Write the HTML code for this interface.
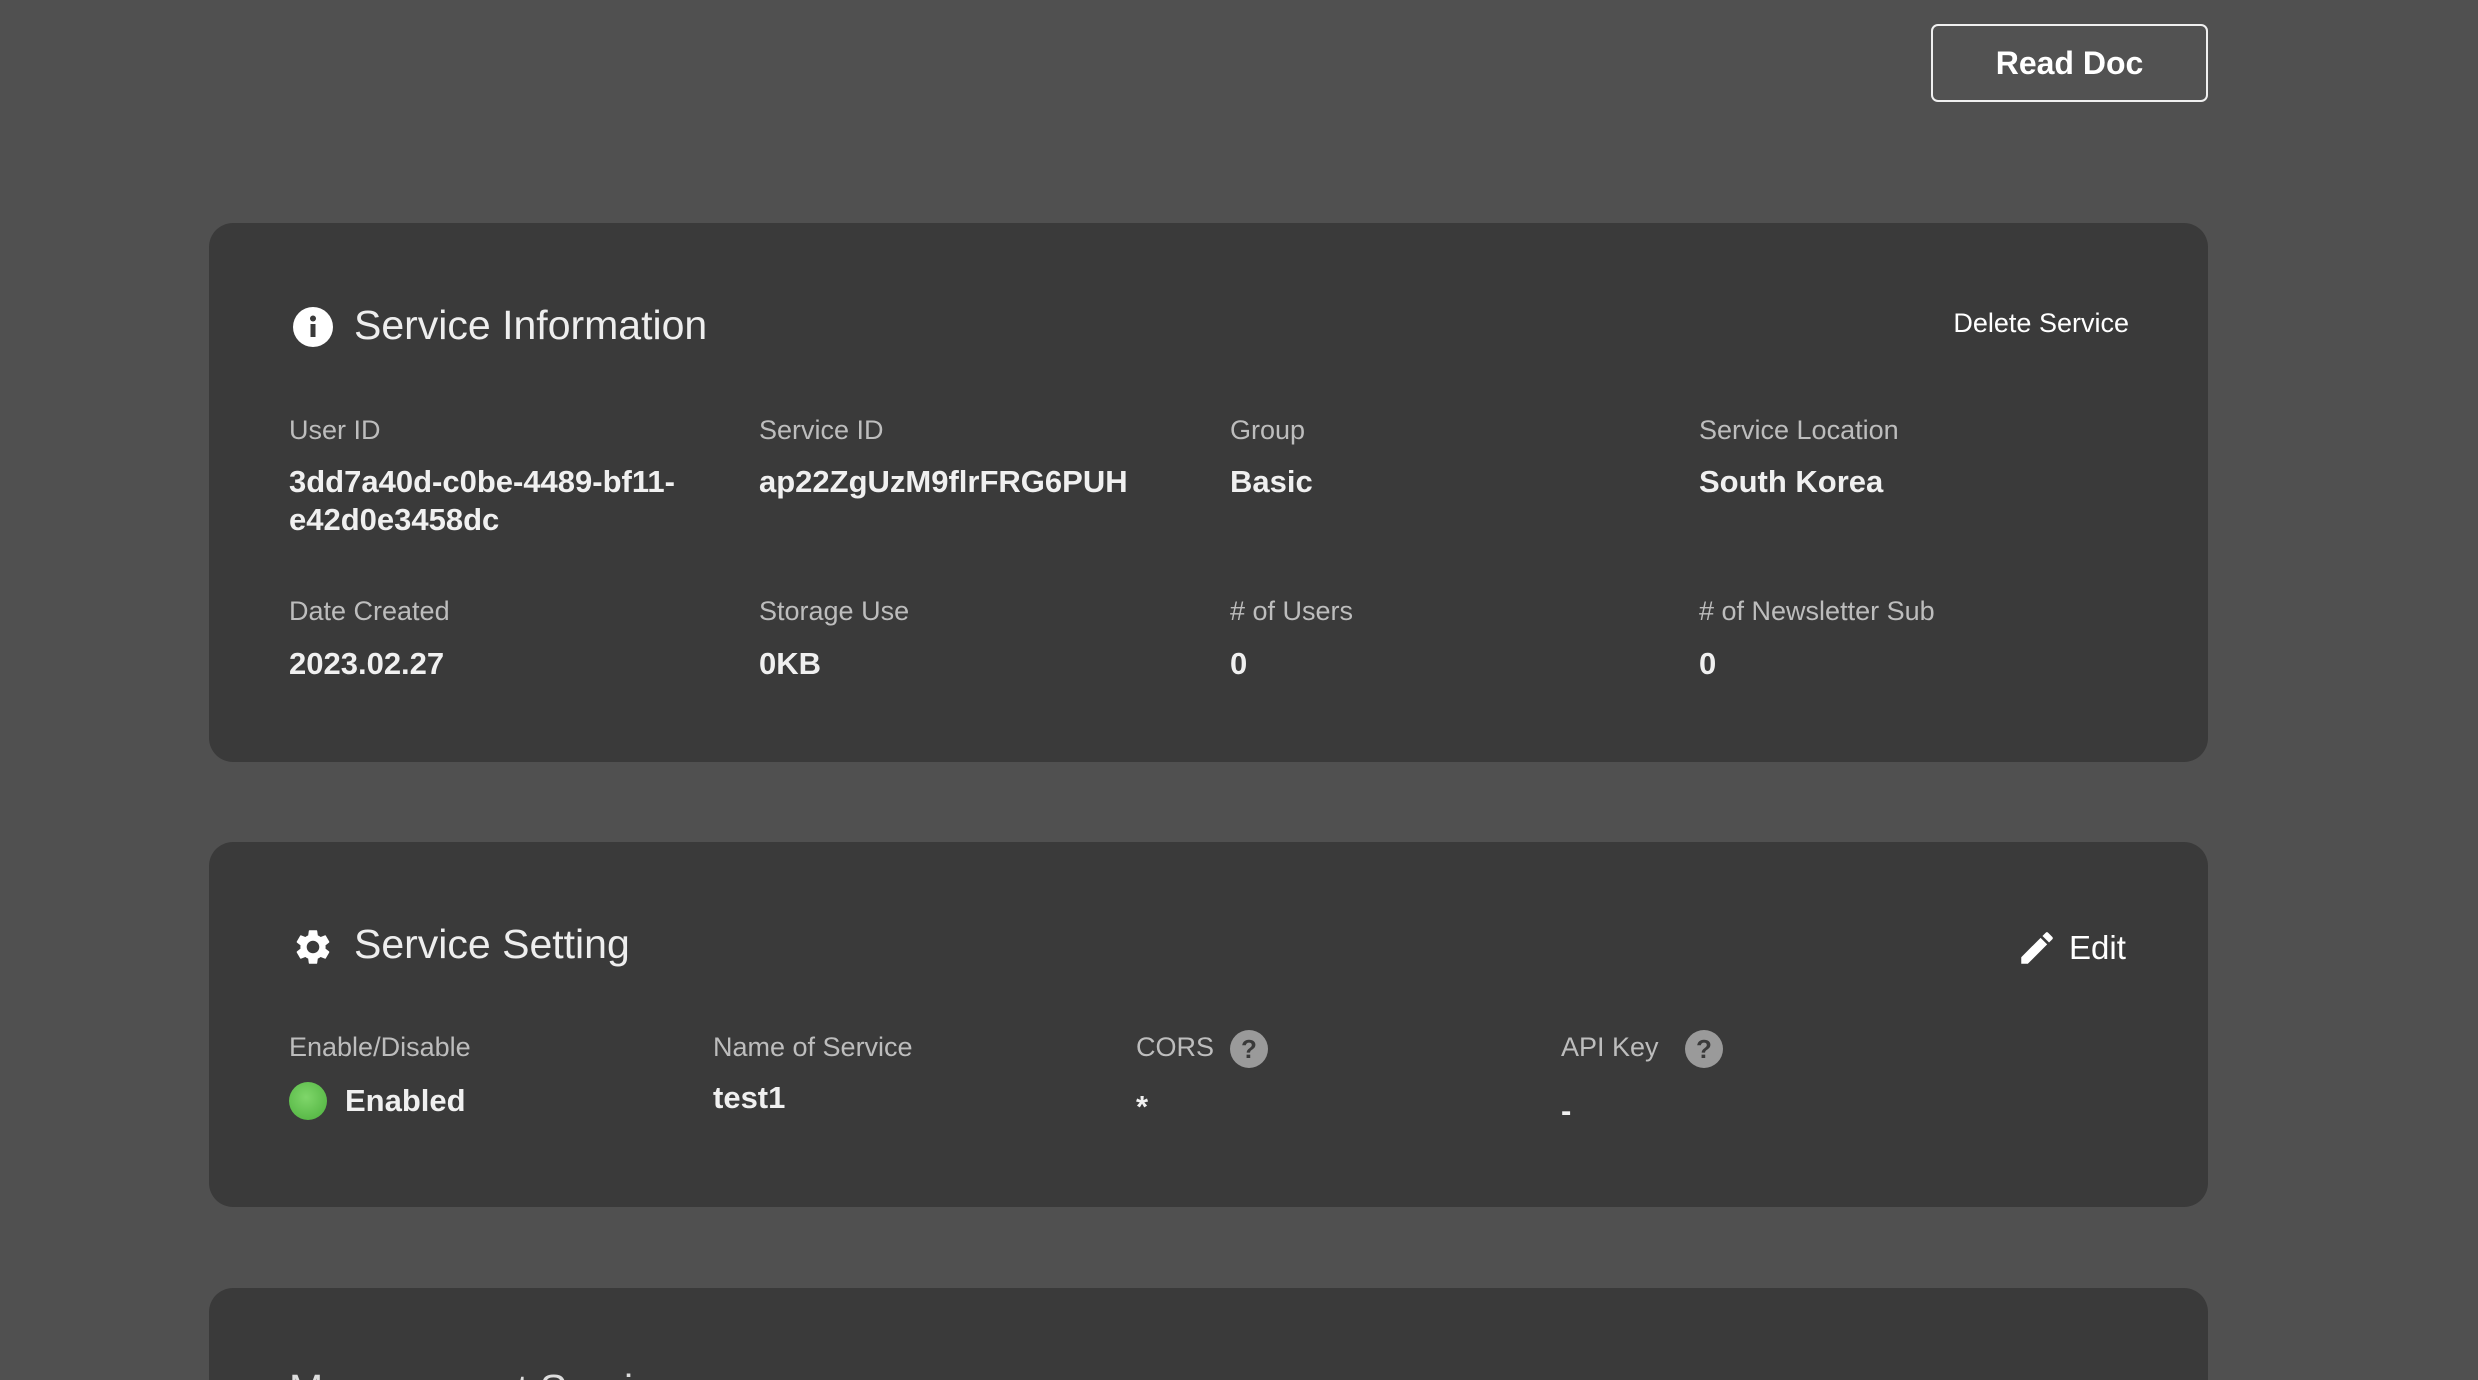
<!DOCTYPE html>
<html style="width:2478px;height:1380px;overflow:hidden"><head><meta charset="utf-8"><style>
*{margin:0;padding:0;box-sizing:border-box}
body{width:2478px;height:1380px;background:#505050;font-family:"Liberation Sans",sans-serif;color:#fff;position:relative;overflow:hidden}
.abs{position:absolute;white-space:nowrap}
.btn{left:1931px;top:24px;width:277px;height:78px;border:2px solid #f0f0f0;border-radius:7px;font-weight:bold;font-size:32px;display:flex;align-items:center;justify-content:center;background:#525252}
.card{position:absolute;left:209px;width:1999px;background:#3a3a3a;border-radius:24px}
.title{font-size:41px;color:#eee}
.lab{font-size:27px;color:#bdbdbd}
.val{font-size:31px;font-weight:bold;color:#f0f0f0;line-height:38px}
.q{position:absolute;width:38px;height:38px;border-radius:50%;background:#9a9a9a;color:#3a3a3a;font-weight:bold;font-size:26px;text-align:center;line-height:38px}
</style></head><body>
<div class="abs btn">Read Doc</div>

<div class="card" style="top:223px;height:539px"></div>
<svg class="abs" style="left:293px;top:307px" width="40" height="40" viewBox="0 0 40 40"><circle cx="20" cy="20" r="20" fill="#fff"/><rect x="17.5" y="17" width="5" height="13" fill="#3a3a3a"/><circle cx="20" cy="11.5" r="3" fill="#3a3a3a"/></svg>
<div class="abs title" style="left:354px;top:302px">Service Information</div>
<div class="abs" style="right:349px;top:308px;font-size:27px;color:#fff">Delete Service</div>

<div class="abs lab" style="left:289px;top:415px">User ID</div>
<div class="abs lab" style="left:759px;top:415px">Service ID</div>
<div class="abs lab" style="left:1230px;top:415px">Group</div>
<div class="abs lab" style="left:1699px;top:415px">Service Location</div>
<div class="abs val" style="left:289px;top:463px">3dd7a40d-c0be-4489-bf11-<br>e42d0e3458dc</div>
<div class="abs val" style="left:759px;top:463px">ap22ZgUzM9flrFRG6PUH</div>
<div class="abs val" style="left:1230px;top:463px">Basic</div>
<div class="abs val" style="left:1699px;top:463px">South Korea</div>

<div class="abs lab" style="left:289px;top:596px">Date Created</div>
<div class="abs lab" style="left:759px;top:596px">Storage Use</div>
<div class="abs lab" style="left:1230px;top:596px"># of Users</div>
<div class="abs lab" style="left:1699px;top:596px"># of Newsletter Sub</div>
<div class="abs val" style="left:289px;top:645px">2023.02.27</div>
<div class="abs val" style="left:759px;top:645px">0KB</div>
<div class="abs val" style="left:1230px;top:645px">0</div>
<div class="abs val" style="left:1699px;top:645px">0</div>

<div class="card" style="top:842px;height:365px"></div>
<svg class="abs" style="left:292px;top:926px" width="42" height="42" viewBox="0 0 24 24"><path fill="#fff" d="M19.14 12.94c.04-.3.06-.61.06-.94 0-.32-.02-.64-.07-.94l2.030-1.58a.49.49 0 0 0 .12-.61l-1.92-3.32a.488.488 0 0 0-.59-.22l-2.39.96c-.5-.38-1.03-.7-1.62-.94l-.36-2.54a.484.484 0 0 0-.48-.41h-3.840c-.24 0-.43.17-.47.41l-.36 2.54c-.59.24-1.13.57-1.62.94l-2.39-.96c-.22-.08-.47 0-.59.22L2.74 8.87c-.12.21-.08.47.12.61l2.03 1.58c-.05.3-.09.63-.09.94s.02.64.07.94l-2.03 1.58a.49.49 0 0 0-.12.61l1.92 3.32c.12.22.37.29.59.22l2.39-.96c.5.38 1.03.7 1.62.94l.36 2.54c.05.24.24.41.48.41h3.84c.24 0 .44-.17.47-.41l.36-2.54c.59-.24 1.13-.56 1.62-.94l2.39.96c.22.08.47 0 .59-.22l1.92-3.32c.12-.22.07-.47-.12-.61l-2.010-1.58zM12 15.6c-1.98 0-3.6-1.62-3.6-3.6s1.62-3.6 3.6-3.6 3.6 1.62 3.6 3.6-1.62 3.6-3.6 3.6z"/></svg>
<div class="abs title" style="left:354px;top:921px">Service Setting</div>
<svg class="abs" style="left:2016px;top:927px" width="42" height="42" viewBox="0 0 24 24"><path fill="#fff" d="M3 17.25V21h3.75L17.81 9.94l-3.75-3.75L3 17.25zM20.71 7.04a1 1 0 0 0 0-1.41l-2.34-2.34a1 1 0 0 0-1.41 0l-1.83 1.83 3.75 3.75 1.83-1.83z"/></svg>
<div class="abs" style="left:2069px;top:929px;font-size:33px;color:#fff">Edit</div>

<div class="abs lab" style="left:289px;top:1032px">Enable/Disable</div>
<div class="abs lab" style="left:713px;top:1032px">Name of Service</div>
<div class="abs lab" style="left:1136px;top:1032px">CORS</div>
<div class="q" style="left:1230px;top:1030px">?</div>
<div class="abs lab" style="left:1561px;top:1032px">API Key</div>
<div class="q" style="left:1685px;top:1030px">?</div>
<div class="abs" style="left:289px;top:1082px;width:38px;height:38px;border-radius:50%;background:radial-gradient(circle at 45% 40%,#7fd66a,#4caf3c)"></div>
<div class="abs val" style="left:345px;top:1082px">Enabled</div>
<div class="abs val" style="left:713px;top:1079px">test1</div>
<div class="abs val" style="left:1136px;top:1088px">*</div>
<div class="abs val" style="left:1561px;top:1092px">-</div>

<div class="card" style="top:1288px;height:92px;border-radius:24px 24px 0 0"></div>
<div class="abs title" style="left:289px;top:1366px;color:#ddd">Management Services</div>
</body></html>
